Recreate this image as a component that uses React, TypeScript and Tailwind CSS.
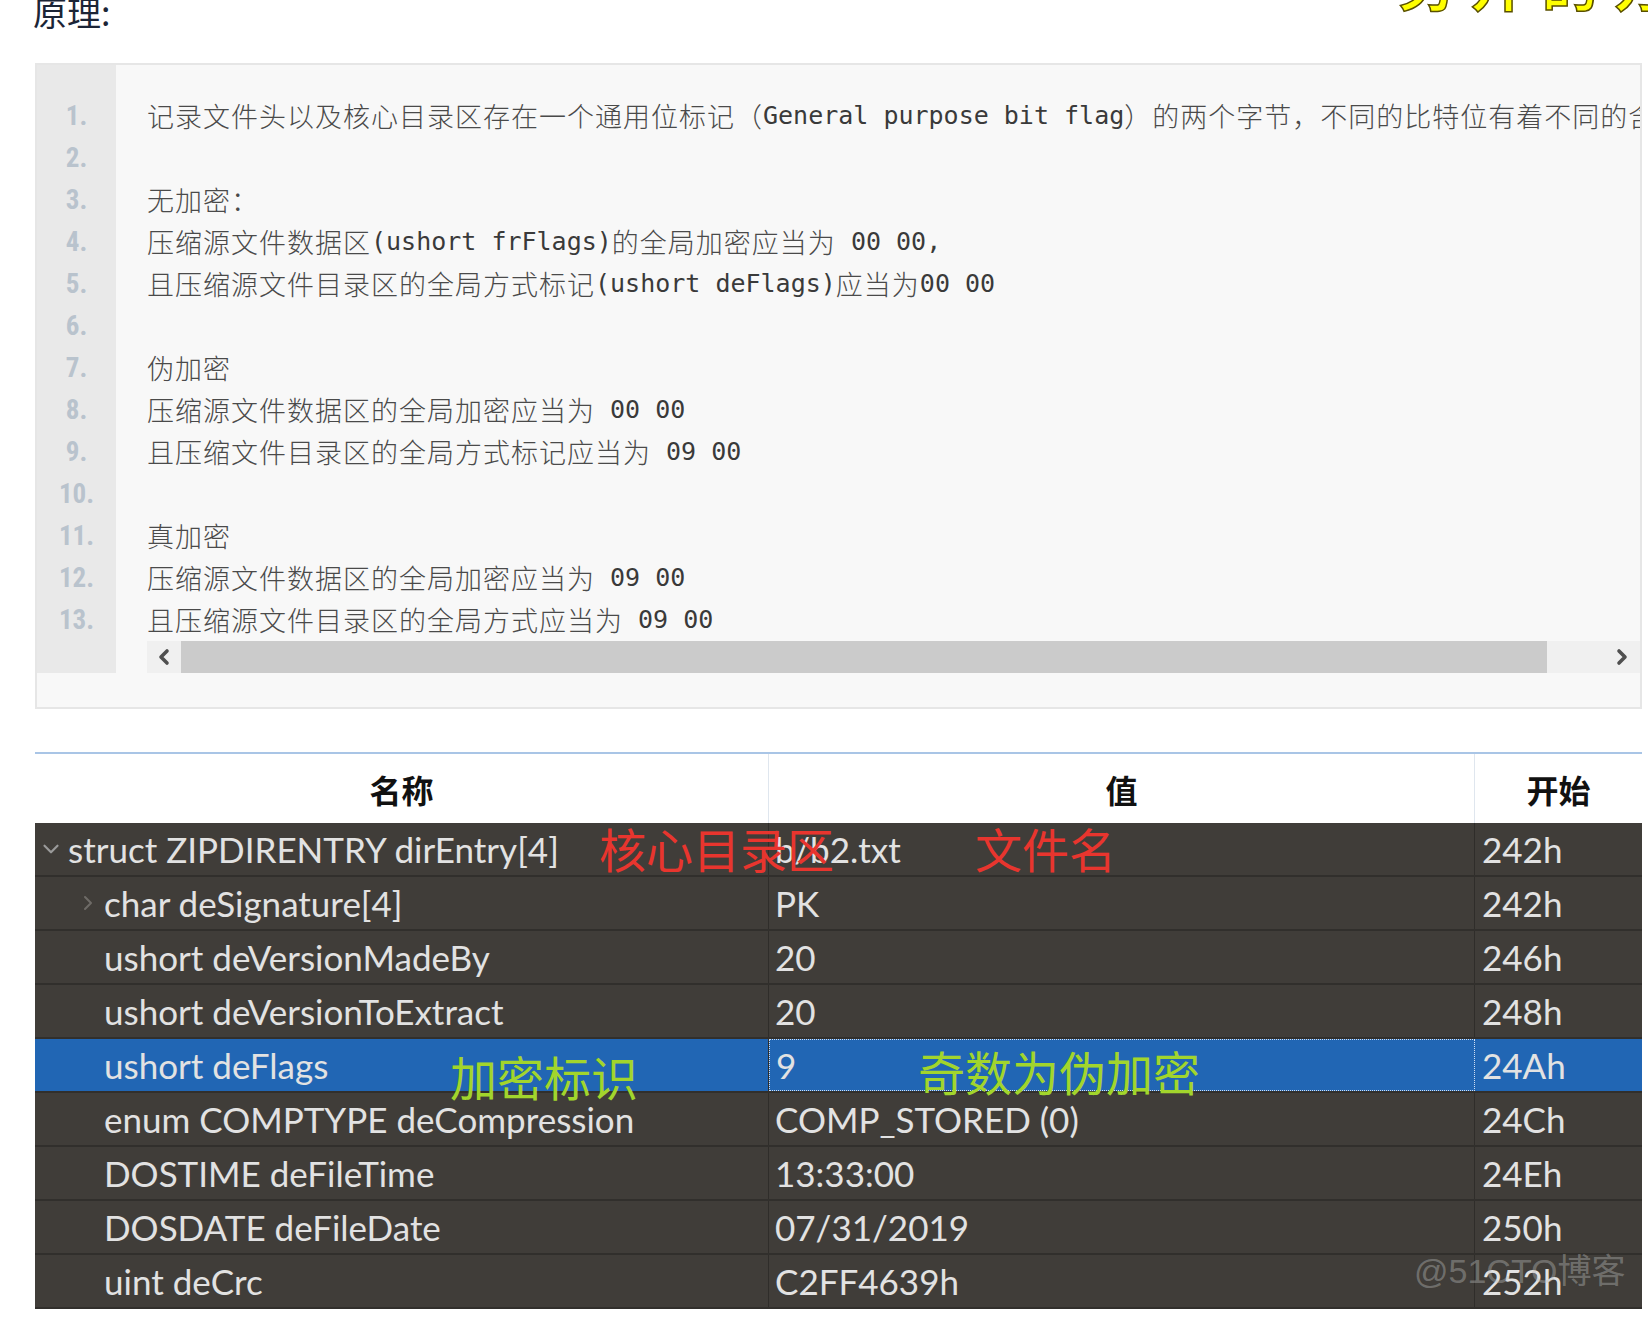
import { ChevronDown, ChevronLeft, ChevronRight } from "lucide-react";

const codeLines = [
  "记录文件头以及核心目录区存在一个通用位标记（General purpose bit flag）的两个字节，不同的比特位有着不同的含义。",
  "",
  "无加密：",
  "压缩源文件数据区(ushort frFlags)的全局加密应当为 00 00,",
  "且压缩源文件目录区的全局方式标记(ushort deFlags)应当为00 00",
  "",
  "伪加密",
  "压缩源文件数据区的全局加密应当为 00 00",
  "且压缩文件目录区的全局方式标记应当为 09 00",
  "",
  "真加密",
  "压缩源文件数据区的全局加密应当为 09 00",
  "且压缩源文件目录区的全局方式应当为 09 00",
];

const rows = [
  { name: "struct ZIPDIRENTRY dirEntry[4]", value: "b/b2.txt", start: "242h", level: 0, icon: "down" },
  { name: "char deSignature[4]", value: "PK", start: "242h", level: 1, icon: "right" },
  { name: "ushort deVersionMadeBy", value: "20", start: "246h", level: 1 },
  { name: "ushort deVersionToExtract", value: "20", start: "248h", level: 1 },
  { name: "ushort deFlags", value: "9", start: "24Ah", level: 1, selected: true },
  { name: "enum COMPTYPE deCompression", value: "COMP_STORED (0)", start: "24Ch", level: 1 },
  { name: "DOSTIME deFileTime", value: "13:33:00", start: "24Eh", level: 1 },
  { name: "DOSDATE deFileDate", value: "07/31/2019", start: "250h", level: 1 },
  { name: "uint deCrc", value: "C2FF4639h", start: "252h", level: 1 },
];

const isWide = (ch: string) => /[\u3000-\u9fff\uff00-\uffef]/.test(ch);

// split a line into runs of wide (CJK) and narrow (ascii) text
function splitRuns(s: string) {
  const runs: { wide: boolean; text: string }[] = [];
  for (const ch of s) {
    const w = isWide(ch);
    const last = runs[runs.length - 1];
    if (last && last.wide === w) last.text += ch;
    else runs.push({ wide: w, text: ch });
  }
  return runs;
}

const cjk = { fontFamily: '"Noto Sans CJK SC", sans-serif' };
const mono = { fontFamily: '"DejaVu Sans Mono", "Liberation Mono", monospace' };
const ui = { fontFamily: 'Lato, "Open Sans", sans-serif' };

function CodeLine({ text }: { text: string }) {
  return (
    <div className="h-[42px] flex items-center whitespace-nowrap text-[#4a4a4a]">
      {splitRuns(text).map((r, i) =>
        r.wide ? (
          <span key={i} className="text-[27px] tracking-[1px] font-light" style={cjk}>
            {r.text}
          </span>
        ) : (
          <span key={i} className="text-[25px] whitespace-pre text-[#3a3a3a]" style={mono}>
            {r.text}
          </span>
        )
      )}
    </div>
  );
}

export default function App() {
  return (
    <div className="w-[1648px] h-[1318px] bg-white overflow-hidden">
      {/* heading */}
      <div className="h-[63px] flex justify-between overflow-hidden">
        <div className="pl-[33px] -mt-[8px] text-[34px] leading-[40px] text-[#1c2536]" style={cjk}>
          原理:
        </div>
        <div
          className="-mt-[48px] mr-[-110px] text-[56px] leading-[60px] font-bold tracking-[16px] text-[#ffff00]"
          style={{ ...cjk, WebkitTextStroke: "1.5px #5a5000" }}
        >
          另开的方式
        </div>
      </div>

      {/* code block */}
      <div className="ml-[35px] w-[1607px] h-[646px] border-2 border-[#e6e6e6] bg-[#f8f8f8] flex flex-col">
        <div className="flex h-[608px]">
          <div className="w-[79px] shrink-0 bg-[#e9e9e9] pt-[30px]">
            {codeLines.map((_, i) => (
              <div
                key={i}
                className="h-[42px] flex items-center justify-center text-[27px] font-bold text-[#b9c3cd]"
                style={{ fontFamily: '"Liberation Sans Narrow", "Roboto Condensed", Roboto, sans-serif' }}
              >
                {i + 1}.
              </div>
            ))}
          </div>
          <div className="flex-1 min-w-0 pl-[31px] pt-[30px] flex flex-col">
            <div className="overflow-hidden">
              {codeLines.map((l, i) => (
                <CodeLine key={i} text={l} />
              ))}
            </div>
            <div className="h-[32px] flex bg-[#f0f0f0]">
              <div className="w-[34px] flex items-center justify-center text-[#505050]">
                <ChevronLeft size={24} strokeWidth={3.6} />
              </div>
              <div className="w-[1366px] bg-[#cbcbcb]" />
              <div className="flex-1 flex items-center justify-end pr-[6px] text-[#505050]">
                <ChevronRight size={24} strokeWidth={3.6} />
              </div>
            </div>
          </div>
        </div>
      </div>

      {/* 010 editor template result */}
      <div className="relative ml-[35px] mt-[43px] w-[1607px]">
        <div className="h-[71px] flex border-t-2 border-[#a9c5e6] bg-white text-[#111] font-bold text-[32px]" style={cjk}>
          <div className="w-[734px] flex items-center justify-center border-r border-[#dfe6ee]">名称</div>
          <div className="w-[706px] flex items-center justify-center border-r border-[#dfe6ee]">值</div>
          <div className="flex-1 flex items-center justify-center">开始</div>
        </div>

        {rows.map((r, i) => (
          <div
            key={i}
            className={`h-[54px] flex border-b-2 border-[#312f2c] text-[35px] text-[#e2e2e2] ${
              r.selected ? "bg-[#2166b4]" : "bg-[#403d39]"
            }`}
            style={ui}
          >
            <div className="w-[734px] flex items-center border-r border-[#2f2d2a]">
              <div className={`${r.level === 0 ? "w-[33px]" : "w-[69px]"} flex justify-end pr-[4px]`}>
                {r.icon === "down" && <ChevronDown size={26} strokeWidth={2} className="text-[#9a9a9a]" />}
                {r.icon === "right" && <ChevronRight size={24} strokeWidth={2} className="text-[#6e6b67]" />}
              </div>
              <span>{r.name}</span>
            </div>
            <div
              className={`w-[706px] flex items-center pl-[6px] border-r border-[#2f2d2a] ${
                r.selected ? "border border-dotted border-[#cfdff3]" : ""
              }`}
            >
              {r.value}
            </div>
            <div className="flex-1 flex items-center pl-[7px]">{r.start}</div>
          </div>
        ))}

        {/* annotations drawn over the screenshot */}
        <div className="absolute left-[564px] top-[72px] text-[47px] leading-none text-[#e8352e]" style={cjk}>
          核心目录区
        </div>
        <div className="absolute left-[940px] top-[72px] text-[47px] leading-none text-[#e8352e]" style={cjk}>
          文件名
        </div>
        <div className="absolute left-[415px] top-[300px] text-[47px] leading-none text-[#a2d52c]" style={cjk}>
          加密标识
        </div>
        <div className="absolute left-[883px] top-[295px] text-[47px] leading-none text-[#a2d52c]" style={cjk}>
          奇数为伪加密
        </div>
        <div
          className="absolute left-[1379px] top-[502px] text-[34px] leading-none text-[#bdbdbd]/40"
          style={{ fontFamily: '"Liberation Sans", "Noto Sans CJK SC", sans-serif' }}
        >
          @51CTO博客
        </div>
      </div>
    </div>
  );
}
